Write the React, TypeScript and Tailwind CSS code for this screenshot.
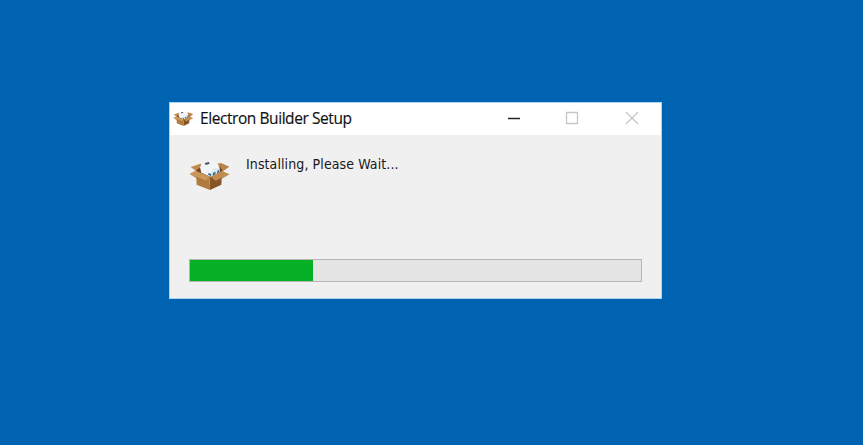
function BoxIcon({ className }: { className: string }) {
  return (
    <svg viewBox="0 0 126 96" className={className} preserveAspectRatio="none" aria-hidden="true">
      <path d="M5 27 34 17 44 26 38 37 22 40Z" fill="#c08c50" />
      <path d="M84 17 96 15 121 26 103 39 88 34Z" fill="#b98449" />
      <path d="M22 36 40 25 92 24 101 38 99 52 64 63 23 48Z" fill="#76461e" />
      <path d="M33 28 39 16 60 10 85 16 91 26 92 42 66 57 37 44Z" fill="#f1f5f8" />
      <path d="M70 33 91 28 92 42 66 57Z" fill="#e1e9ef" />
      <path d="M47 15 60 12 62 17 50 21Z" fill="#48525a" />
      <path d="m58 45 9 3-1 6-8-3Zm14-1 8-3-1 8-8 4Zm13-6 6-3-1 8-6 4Z" fill="#2e689b" />
      <path d="M21 42 62 58 63 96 23 80Z" fill="#b27a3d" />
      <path d="M63 58 99 43 97 80 63 96Z" fill="#87542a" />
      <path d="M19 38 64 56 49 69 1 48Z" fill="#cb975a" />
      <path d="M64 56 99 39 122 49 80 68Z" fill="#c08b4c" />
      <path d="M1 48 49 68 49 71 22 60Z" fill="#a87138" />
      <path d="M122 49 80 68 80 71 98 62Z" fill="#99632e" />
    </svg>
  );
}

function WindowControls() {
  return (
    <div className="flex items-center pr-[22px] pb-[2px]">
      <button className="flex" aria-label="Minimize">
        <svg width="14" height="14" viewBox="0 0 14 14"><path d="M1 7.5h12" stroke="#252525" strokeWidth="1.5" /></svg>
      </button>
      <button className="ml-[44px] flex" aria-label="Maximize" disabled>
        <svg width="14" height="14" viewBox="0 0 14 14" fill="none"><path d="M1.5 1.5h11v11h-11Z" stroke="#c6c6c6" strokeWidth="1.3" /></svg>
      </button>
      <button className="ml-[46px] flex" aria-label="Close" disabled>
        <svg width="14" height="14" viewBox="0 0 14 14"><path d="m1 1 12 12M13 1 1 13" stroke="#c6c6c6" strokeWidth="1.3" /></svg>
      </button>
    </div>
  );
}

export default function App() {
  return (
    <main className="h-[445px] w-[863px] overflow-hidden bg-[#0063b1] pt-[102px] pl-[169px]">
      <section className="flex h-[197px] w-[493px] flex-col border border-[#a9d4f2] bg-[#f0f0f0]">
        <header className="flex h-8 shrink-0 items-center justify-between bg-white">
          <div className="flex items-center pb-[3px]">
            <BoxIcon className="ml-[3px] h-4 w-[21px]" />
            <h1 className="ml-[6px] whitespace-nowrap [font-family:'Open_Sans',sans-serif] text-[15.5px] leading-5 tracking-[-0.43px] text-[#111] [-webkit-text-stroke:0.15px_#111]">Electron Builder Setup</h1>
          </div>
          <WindowControls />
        </header>
        <div className="flex h-[124px] shrink-0 pt-[20px] pl-[19px]">
          <BoxIcon className="mt-[3px] h-8 w-[42px] shrink-0" />
          <p className="ml-[15px] whitespace-nowrap font-['DejaVu_Sans_Condensed','DejaVu_Sans',sans-serif] text-[14px] leading-[18px] tracking-[0.1px] text-[#181818]">Installing, Please Wait...</p>
        </div>
        <div className="mx-[19px] h-[23px] shrink-0 border border-[#b6b6b6] bg-[#e5e5e5]">
          <div className="h-full w-[123px] bg-[#06b025]" />
        </div>
      </section>
    </main>
  );
}
